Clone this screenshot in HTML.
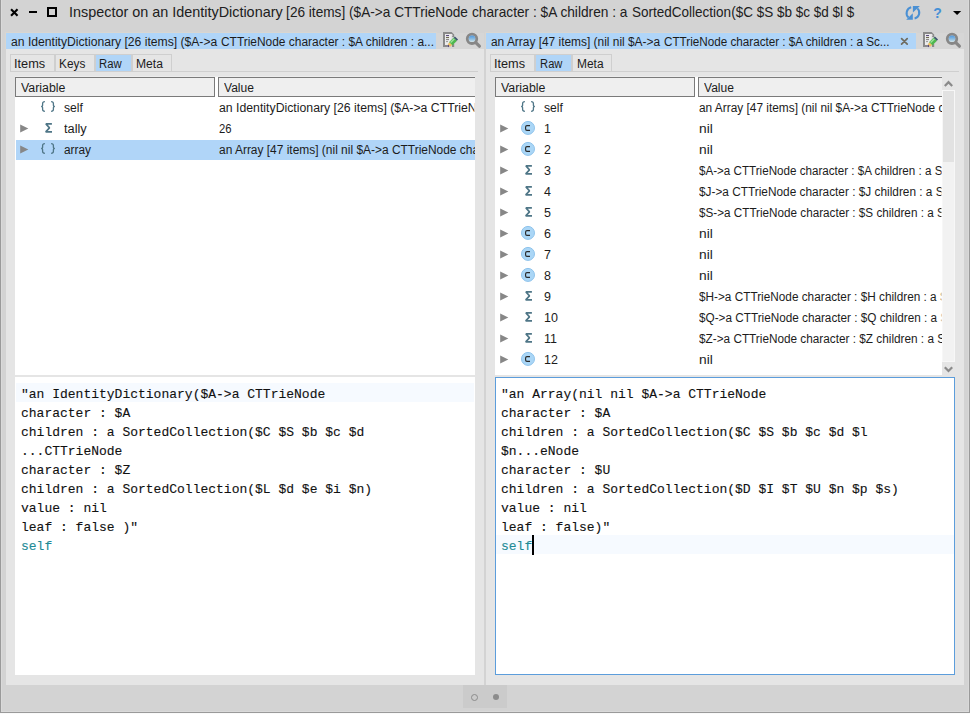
<!DOCTYPE html>
<html><head><meta charset="utf-8"><style>
*{margin:0;padding:0;box-sizing:border-box}
html,body{width:970px;height:714px;overflow:hidden;background:#d3d3d3}
body{position:relative;font-family:"Liberation Sans",sans-serif;color:#1c1c1c}
.a{position:absolute}
.t{position:absolute;white-space:pre;height:20px;line-height:20px}
.mono{position:absolute;font-family:"Liberation Mono",monospace;font-size:13px;line-height:19px;white-space:pre;color:#111;-webkit-text-stroke:0.12px #111}
</style></head><body>
<div class="a" style="left:0px;top:0px;width:1px;height:713px;background:#9a9a9a;"></div>
<div class="a" style="left:1px;top:0px;width:1px;height:712px;background:#dadada;"></div>
<div class="a" style="left:968px;top:0px;width:1px;height:712px;background:#d9d9d9;"></div>
<div class="a" style="left:969px;top:0px;width:1px;height:713px;background:#9a9a9a;"></div>
<div class="a" style="left:1px;top:711px;width:968px;height:1px;background:#dadada;"></div>
<div class="a" style="left:0px;top:712px;width:970px;height:1px;background:#9a9a9a;"></div>
<div class="a" style="left:0px;top:713px;width:970px;height:1px;background:#fafafa;"></div>
<svg class="a" style="left:0;top:0" width="70" height="30">
 <path d="M11.8 9.9 L16.8 14.9 M16.8 9.9 L11.8 14.9" stroke="#000" stroke-width="2.1" stroke-linecap="square"/>
 <rect x="29" y="11" width="8" height="2" fill="#000"/>
 <rect x="48" y="8" width="8" height="8" fill="none" stroke="#000" stroke-width="2"/>
</svg>
<div class="t" style="left:68.90px;top:2px;font-size:15px;transform-origin:1.00px 50%;transform:scaleX(0.9594);color:#202020;">Inspector on an IdentityDictionary</div>
<div class="t" style="left:285.90px;top:2px;font-size:15px;transform-origin:1.00px 50%;transform:scaleX(0.9094);color:#202020;">[26 items] ($A-&gt;a CTTrieNode</div>
<div class="t" style="left:471.60px;top:2px;font-size:15px;transform-origin:0.00px 50%;transform:scaleX(0.9139);color:#202020;">character : $A children : a</div>
<div class="t" style="left:632.10px;top:2px;font-size:15px;transform-origin:0.00px 50%;transform:scaleX(0.9007);color:#202020;">SortedCollection($C $S $b $c $d $l $</div>
<svg class="a" style="left:900px;top:0" width="70" height="26" viewBox="900 0 70 26">
 <path d="M911.2 7.3 A6 6 0 0 0 908.6 17.6" fill="none" stroke="#4a90d4" stroke-width="2"/>
 <path d="M906.2 19.8 L912.8 19.8 L912.8 13.3Z" fill="#4a90d4"/>
 <path d="M914.6 18.6 A6 6 0 0 0 917.4 8.4" fill="none" stroke="#4a90d4" stroke-width="2"/>
 <path d="M912.9 6 L919.9 6 L912.9 12.6Z" fill="#4a90d4"/>
 <path d="M953 11 L961.2 11 L957.1 15Z" fill="#000"/>
</svg>
<div class="t" style="left:933.20px;top:3px;font-size:14px;letter-spacing:0.000px;word-spacing:0px;color:#4590d6;font-weight:bold;">?</div>
<svg width="0" height="0" style="position:absolute"><defs><linearGradient id="lens" x1="0" y1="0" x2="0" y2="1"><stop offset="0" stop-color="#4d98e0"/><stop offset="0.55" stop-color="#8fbde0"/><stop offset="1" stop-color="#d6e6ea"/></linearGradient></defs></svg>
<div class="a" style="left:5px;top:32px;width:432px;height:17px;background:#d9d6d0;"></div>
<div class="a" style="left:6px;top:49px;width:478px;height:636px;background:#e5e5e5;"></div>
<div class="a" style="left:6px;top:33px;width:430px;height:16px;background:#b0d5f8;"></div>
<div class="a" style="left:436px;top:33px;width:48px;height:16px;background:#d6d6d6;"></div>
<div class="t" style="left:10.70px;top:32px;font-size:12.5px;transform-origin:0.00px 50%;transform:scaleX(0.9717);">an IdentityDictionary [26 items] ($A-&gt;a</div>
<div class="t" style="left:221.10px;top:32px;font-size:12.5px;transform-origin:0.00px 50%;transform:scaleX(0.9541);">CTTrieNode character : $A children : a...</div>
<svg class="a" style="left:440px;top:30px" width="44" height="20" viewBox="440 30 44 20">
 <path d="M443 32 L451.6 32 L454.2 34.6 L454.2 37 L452.2 37 L452.2 34 L445 34 L445 45 L447 45 L447 47 L443 47Z" fill="#8a8a8a"/>
 <path d="M451.6 34 L451.6 35.5 L453 35.5Z" fill="#f4f4f4"/>
 <rect x="445" y="34" width="6.6" height="11" fill="#ececec"/>
 <rect x="452" y="44" width="2.2" height="3" fill="#8a8a8a"/>
 <rect x="446" y="35" width="3" height="1.1" fill="#5b4a7e"/>
 <rect x="446" y="37" width="3" height="1.1" fill="#6d6a4e"/>
 <rect x="446" y="39" width="3" height="1.1" fill="#8a8a8a"/>
 <rect x="446" y="41" width="2" height="1.1" fill="#a0a0a0"/>
 <path d="M450.6 43.9 L455.4 39.1" stroke="#4fb84f" stroke-width="4.6"/>
 <path d="M450.6 42.6 L454.4 38.8" stroke="#9ae39a" stroke-width="1.4"/>
 <path d="M455.3 39.2 L456.5 38" stroke="#3f5670" stroke-width="4.4"/>
 <path d="M448.9 45.6 L450.7 43.8" stroke="#f4c060" stroke-width="3.6"/>
 <path d="M447.6 46.6 L448.8 45.4" stroke="#4a3a6a" stroke-width="1.8"/>
 <circle cx="472" cy="38.8" r="4.7" fill="none" stroke="#878787" stroke-width="2.9"/>
 <circle cx="472" cy="38.8" r="3.3" fill="url(#lens)"/>
 <path d="M475.8 42.6 L479.4 46.2" stroke="#878787" stroke-width="3.2" stroke-linecap="round"/>
</svg>
<div class="a" style="left:10px;top:71px;width:468px;height:1px;background:#cfcfcf;"></div>
<div class="a" style="left:10px;top:54px;width:45px;height:18px;border:1px solid #cfcfcf;background:#e5e5e5"></div>
<div class="t" style="left:14.20px;top:54px;font-size:12.5px;transform-origin:1.00px 50%;transform:scaleX(1.0201);">Items</div>
<div class="a" style="left:55px;top:54px;width:40px;height:18px;border:1px solid #cfcfcf;background:#e5e5e5"></div>
<div class="t" style="left:59.30px;top:54px;font-size:12.5px;transform-origin:1.00px 50%;transform:scaleX(0.9458);">Keys</div>
<div class="a" style="left:95px;top:54px;width:37px;height:18px;border:1px solid #cfcfcf;background:#b0d5f8"></div>
<div class="t" style="left:99.20px;top:54px;font-size:12.5px;transform-origin:1.00px 50%;transform:scaleX(0.9048);">Raw</div>
<div class="a" style="left:132px;top:54px;width:40px;height:18px;border:1px solid #cfcfcf;background:#e5e5e5"></div>
<div class="t" style="left:136.30px;top:54px;font-size:12.5px;transform-origin:1.00px 50%;transform:scaleX(0.9688);">Meta</div>
<div class="a" style="left:15px;top:76px;width:460px;height:299px;background:#fff;"></div>
<div class="a" style="left:15px;top:76px;width:460px;height:1px;background:#ececec;"></div>
<div class="a" style="left:15px;top:77px;width:200px;height:20px;border:1px solid #7a7a7a;background:#efefef"></div>
<div class="a" style="left:218px;top:77px;width:257px;height:20px;border:1px solid #7a7a7a;border-right:none;background:#efefef"></div>
<div class="t" style="left:20.80px;top:78px;font-size:12.5px;transform-origin:0.00px 50%;transform:scaleX(0.9893);">Variable</div>
<div class="t" style="left:223.90px;top:78px;font-size:12.5px;transform-origin:0.00px 50%;transform:scaleX(0.9649);">Value</div>
<svg class="a" style="left:39px;top:98px" width="18" height="16" viewBox="39 98 18 16"><path d="M44.90 101.60 Q42.60 101.60 42.60 103.50 L42.60 105.40 Q42.60 106.40 41.10 106.40 Q42.60 106.40 42.60 107.40 L42.60 109.60 Q42.60 111.40 44.90 111.40 M51.10 101.60 Q53.40 101.60 53.40 103.50 L53.40 105.40 Q53.40 106.40 54.90 106.40 Q53.40 106.40 53.40 107.40 L53.40 109.60 Q53.40 111.40 51.10 111.40" fill="none" stroke="#4f7687" stroke-width="1.3"/></svg>
<div class="t" style="left:64.10px;top:98px;font-size:12.5px;transform-origin:0.00px 50%;transform:scaleX(0.9710);">self</div>
<div class="t" style="left:219.30px;top:98px;font-size:12.5px;transform-origin:0.00px 50%;transform:scaleX(0.9819);width:260.42px;overflow:hidden;">an IdentityDictionary [26 items] ($A-&gt;a CTTrieNode character : $A children</div>
<svg class="a" style="left:19px;top:122px" width="11" height="12" viewBox="19 122 11 12"><path d="M20.2 124.4 L28.3 128.4 L20.2 132.4Z" fill="#878787"/></svg>
<svg class="a" style="left:43px;top:120px" width="12" height="15" viewBox="43 120 12 15"><path d="M51.9 123.9 L45.9 123.9 L49.5 127.9 L45.7 131.9 L52 131.9" fill="none" stroke="#4f7687" stroke-width="1.65" stroke-linejoin="bevel"/></svg>
<div class="t" style="left:64.10px;top:119px;font-size:12.5px;transform-origin:0.00px 50%;transform:scaleX(1.0227);">tally</div>
<div class="t" style="left:219.30px;top:119px;font-size:12.5px;transform-origin:0.00px 50%;transform:scaleX(0.9031);width:283.14px;overflow:hidden;">26</div>
<div class="a" style="left:16px;top:140px;width:459px;height:20px;background:#b0d5f8;"></div>
<svg class="a" style="left:19px;top:143px" width="11" height="12" viewBox="19 143 11 12"><path d="M20.2 145.4 L28.3 149.4 L20.2 153.4Z" fill="#878787"/></svg>
<svg class="a" style="left:39px;top:140px" width="18" height="16" viewBox="39 140 18 16"><path d="M44.90 143.60 Q42.60 143.60 42.60 145.50 L42.60 147.40 Q42.60 148.40 41.10 148.40 Q42.60 148.40 42.60 149.40 L42.60 151.60 Q42.60 153.40 44.90 153.40 M51.10 143.60 Q53.40 143.60 53.40 145.50 L53.40 147.40 Q53.40 148.40 54.90 148.40 Q53.40 148.40 53.40 149.40 L53.40 151.60 Q53.40 153.40 51.10 153.40" fill="none" stroke="#4f7687" stroke-width="1.3"/></svg>
<div class="t" style="left:64.10px;top:140px;font-size:12.5px;transform-origin:0.00px 50%;transform:scaleX(0.9477);">array</div>
<div class="t" style="left:219.30px;top:140px;font-size:12.5px;transform-origin:0.00px 50%;transform:scaleX(0.9553);width:267.68px;overflow:hidden;">an Array [47 items] (nil nil $A-&gt;a CTTrieNode character : $A children</div>
<div class="a" style="left:15px;top:377px;width:460px;height:298px;background:#fff;"></div>
<div class="a" style="left:16px;top:383px;width:458px;height:19px;background:#f6faff;"></div>
<div class="mono" style="left:21px;top:385px">"an IdentityDictionary($A-&gt;a CTTrieNode
character : $A
children : a SortedCollection($C $S $b $c $d
...CTTrieNode
character : $Z
children : a SortedCollection($L $d $e $i $n)
value : nil
leaf : false )"
<span style="color:#1e8a96;-webkit-text-stroke-color:#1e8a96">self</span></div>
<div class="a" style="left:484px;top:32px;width:2px;height:654px;background:#d3d3d3;"></div>
<div class="a" style="left:485px;top:32px;width:432px;height:17px;background:#d9d6d0;"></div>
<div class="a" style="left:486px;top:49px;width:478px;height:636px;background:#e5e5e5;"></div>
<div class="a" style="left:486px;top:33px;width:430px;height:16px;background:#b0d5f8;"></div>
<div class="a" style="left:916px;top:33px;width:48px;height:16px;background:#d6d6d6;"></div>
<div class="t" style="left:490.50px;top:32px;font-size:12.5px;transform-origin:0.00px 50%;transform:scaleX(0.9526);">an Array [47 items] (nil nil $A-&gt;a</div>
<div class="t" style="left:664.00px;top:32px;font-size:12.5px;transform-origin:0.00px 50%;transform:scaleX(0.9345);">CTTrieNode character : $A children : a Sc...</div>
<svg class="a" style="left:920px;top:30px" width="44" height="20" viewBox="920 30 44 20">
 <path d="M923 32 L931.6 32 L934.2 34.6 L934.2 37 L932.2 37 L932.2 34 L925 34 L925 45 L927 45 L927 47 L923 47Z" fill="#8a8a8a"/>
 <path d="M931.6 34 L931.6 35.5 L933 35.5Z" fill="#f4f4f4"/>
 <rect x="925" y="34" width="6.6" height="11" fill="#ececec"/>
 <rect x="932" y="44" width="2.2" height="3" fill="#8a8a8a"/>
 <rect x="926" y="35" width="3" height="1.1" fill="#5b4a7e"/>
 <rect x="926" y="37" width="3" height="1.1" fill="#6d6a4e"/>
 <rect x="926" y="39" width="3" height="1.1" fill="#8a8a8a"/>
 <rect x="926" y="41" width="2" height="1.1" fill="#a0a0a0"/>
 <path d="M930.6 43.9 L935.4 39.1" stroke="#4fb84f" stroke-width="4.6"/>
 <path d="M930.6 42.6 L934.4 38.8" stroke="#9ae39a" stroke-width="1.4"/>
 <path d="M935.3 39.2 L936.5 38" stroke="#3f5670" stroke-width="4.4"/>
 <path d="M928.9 45.6 L930.7 43.8" stroke="#f4c060" stroke-width="3.6"/>
 <path d="M927.6 46.6 L928.8 45.4" stroke="#4a3a6a" stroke-width="1.8"/>
 <circle cx="952" cy="38.8" r="4.7" fill="none" stroke="#878787" stroke-width="2.9"/>
 <circle cx="952" cy="38.8" r="3.3" fill="url(#lens)"/>
 <path d="M955.8 42.6 L959.4 46.2" stroke="#878787" stroke-width="3.2" stroke-linecap="round"/>
</svg>
<div class="a" style="left:490px;top:71px;width:469px;height:1px;background:#cfcfcf;"></div>
<div class="a" style="left:490px;top:54px;width:45px;height:18px;border:1px solid #cfcfcf;background:#e5e5e5"></div>
<div class="t" style="left:494.40px;top:54px;font-size:12.5px;transform-origin:1.00px 50%;transform:scaleX(1.0167);">Items</div>
<div class="a" style="left:535px;top:54px;width:37px;height:18px;border:1px solid #cfcfcf;background:#b0d5f8"></div>
<div class="t" style="left:539.50px;top:54px;font-size:12.5px;transform-origin:1.00px 50%;transform:scaleX(0.8927);">Raw</div>
<div class="a" style="left:572px;top:54px;width:40px;height:18px;border:1px solid #cfcfcf;background:#e5e5e5"></div>
<div class="t" style="left:576.60px;top:54px;font-size:12.5px;transform-origin:1.00px 50%;transform:scaleX(0.9539);">Meta</div>
<div class="a" style="left:495px;top:76px;width:447px;height:299px;background:#fff;"></div>
<div class="a" style="left:495px;top:76px;width:447px;height:1px;background:#ececec;"></div>
<div class="a" style="left:495px;top:77px;width:200px;height:20px;border:1px solid #7a7a7a;background:#efefef"></div>
<div class="a" style="left:698px;top:77px;width:244px;height:20px;border:1px solid #7a7a7a;border-right:none;background:#efefef"></div>
<div class="t" style="left:500.80px;top:78px;font-size:12.5px;transform-origin:0.00px 50%;transform:scaleX(0.9893);">Variable</div>
<div class="t" style="left:703.90px;top:78px;font-size:12.5px;transform-origin:0.00px 50%;transform:scaleX(0.9649);">Value</div>
<svg class="a" style="left:519px;top:98px" width="18" height="16" viewBox="519 98 18 16"><path d="M524.90 101.60 Q522.60 101.60 522.60 103.50 L522.60 105.40 Q522.60 106.40 521.10 106.40 Q522.60 106.40 522.60 107.40 L522.60 109.60 Q522.60 111.40 524.90 111.40 M531.10 101.60 Q533.40 101.60 533.40 103.50 L533.40 105.40 Q533.40 106.40 534.90 106.40 Q533.40 106.40 533.40 107.40 L533.40 109.60 Q533.40 111.40 531.10 111.40" fill="none" stroke="#4f7687" stroke-width="1.3"/></svg>
<div class="t" style="left:544.10px;top:98px;font-size:12.5px;transform-origin:0.00px 50%;transform:scaleX(0.9710);">self</div>
<div class="t" style="left:699.30px;top:98px;font-size:12.5px;transform-origin:0.00px 50%;transform:scaleX(0.9498);width:255.54px;overflow:hidden;">an Array [47 items] (nil nil $A-&gt;a CTTrieNode character : $A</div>
<svg class="a" style="left:499px;top:122px" width="11" height="12" viewBox="499 122 11 12"><path d="M500.2 124.4 L508.3 128.4 L500.2 132.4Z" fill="#878787"/></svg>
<svg class="a" style="left:520px;top:119px" width="16" height="18" viewBox="520 119 16 18"><circle cx="528" cy="127.9" r="6.5" fill="#aad6f6" stroke="#8ec3ec" stroke-width="1"/><path d="M530 125.60000000000001 L527 125.60000000000001 Q525.6 125.60000000000001 525.6 127.0 L525.6 129.0 Q525.6 130.4 527 130.4 L530 130.4" fill="none" stroke="#2a2a2a" stroke-width="1.15"/></svg>
<div class="t" style="left:544.10px;top:119px;font-size:12.5px;letter-spacing:0.000px;word-spacing:-0.6px;">1</div>
<div class="t" style="left:699.30px;top:119px;font-size:12.5px;transform-origin:0.00px 50%;transform:scaleX(1.0998);width:220.67px;overflow:hidden;">nil</div>
<svg class="a" style="left:499px;top:143px" width="11" height="12" viewBox="499 143 11 12"><path d="M500.2 145.4 L508.3 149.4 L500.2 153.4Z" fill="#878787"/></svg>
<svg class="a" style="left:520px;top:140px" width="16" height="18" viewBox="520 140 16 18"><circle cx="528" cy="148.9" r="6.5" fill="#aad6f6" stroke="#8ec3ec" stroke-width="1"/><path d="M530 146.6 L527 146.6 Q525.6 146.6 525.6 148.0 L525.6 150.0 Q525.6 151.4 527 151.4 L530 151.4" fill="none" stroke="#2a2a2a" stroke-width="1.15"/></svg>
<div class="t" style="left:544.10px;top:140px;font-size:12.5px;letter-spacing:0.000px;word-spacing:-0.6px;">2</div>
<div class="t" style="left:699.30px;top:140px;font-size:12.5px;transform-origin:0.00px 50%;transform:scaleX(1.0998);width:220.67px;overflow:hidden;">nil</div>
<svg class="a" style="left:499px;top:164px" width="11" height="12" viewBox="499 164 11 12"><path d="M500.2 166.4 L508.3 170.4 L500.2 174.4Z" fill="#878787"/></svg>
<svg class="a" style="left:523px;top:162px" width="12" height="15" viewBox="523 162 12 15"><path d="M531.9 165.9 L525.9 165.9 L529.5 169.9 L525.7 173.9 L532 173.9" fill="none" stroke="#4f7687" stroke-width="1.65" stroke-linejoin="bevel"/></svg>
<div class="t" style="left:544.10px;top:161px;font-size:12.5px;letter-spacing:0.000px;word-spacing:-0.6px;">3</div>
<div class="t" style="left:699.30px;top:161px;font-size:12.5px;transform-origin:0.00px 50%;transform:scaleX(0.9297);width:261.06px;overflow:hidden;">$A-&gt;a CTTrieNode character : $A children : a SortedCollection</div>
<svg class="a" style="left:499px;top:185px" width="11" height="12" viewBox="499 185 11 12"><path d="M500.2 187.4 L508.3 191.4 L500.2 195.4Z" fill="#878787"/></svg>
<svg class="a" style="left:523px;top:183px" width="12" height="15" viewBox="523 183 12 15"><path d="M531.9 186.9 L525.9 186.9 L529.5 190.9 L525.7 194.9 L532 194.9" fill="none" stroke="#4f7687" stroke-width="1.65" stroke-linejoin="bevel"/></svg>
<div class="t" style="left:544.10px;top:182px;font-size:12.5px;letter-spacing:0.000px;word-spacing:-0.6px;">4</div>
<div class="t" style="left:699.30px;top:182px;font-size:12.5px;transform-origin:0.00px 50%;transform:scaleX(0.9470);width:256.28px;overflow:hidden;">$J-&gt;a CTTrieNode character : $J children : a SortedCollection</div>
<svg class="a" style="left:499px;top:206px" width="11" height="12" viewBox="499 206 11 12"><path d="M500.2 208.4 L508.3 212.4 L500.2 216.4Z" fill="#878787"/></svg>
<svg class="a" style="left:523px;top:204px" width="12" height="15" viewBox="523 204 12 15"><path d="M531.9 207.9 L525.9 207.9 L529.5 211.9 L525.7 215.9 L532 215.9" fill="none" stroke="#4f7687" stroke-width="1.65" stroke-linejoin="bevel"/></svg>
<div class="t" style="left:544.10px;top:203px;font-size:12.5px;letter-spacing:0.000px;word-spacing:-0.6px;">5</div>
<div class="t" style="left:699.30px;top:203px;font-size:12.5px;transform-origin:0.00px 50%;transform:scaleX(0.9360);width:259.28px;overflow:hidden;">$S-&gt;a CTTrieNode character : $S children : a SortedCollection</div>
<svg class="a" style="left:499px;top:227px" width="11" height="12" viewBox="499 227 11 12"><path d="M500.2 229.4 L508.3 233.4 L500.2 237.4Z" fill="#878787"/></svg>
<svg class="a" style="left:520px;top:224px" width="16" height="18" viewBox="520 224 16 18"><circle cx="528" cy="232.9" r="6.5" fill="#aad6f6" stroke="#8ec3ec" stroke-width="1"/><path d="M530 230.6 L527 230.6 Q525.6 230.6 525.6 232.0 L525.6 234.0 Q525.6 235.4 527 235.4 L530 235.4" fill="none" stroke="#2a2a2a" stroke-width="1.15"/></svg>
<div class="t" style="left:544.10px;top:224px;font-size:12.5px;letter-spacing:0.000px;word-spacing:-0.6px;">6</div>
<div class="t" style="left:699.30px;top:224px;font-size:12.5px;transform-origin:0.00px 50%;transform:scaleX(1.0998);width:220.67px;overflow:hidden;">nil</div>
<svg class="a" style="left:499px;top:248px" width="11" height="12" viewBox="499 248 11 12"><path d="M500.2 250.4 L508.3 254.4 L500.2 258.4Z" fill="#878787"/></svg>
<svg class="a" style="left:520px;top:245px" width="16" height="18" viewBox="520 245 16 18"><circle cx="528" cy="253.9" r="6.5" fill="#aad6f6" stroke="#8ec3ec" stroke-width="1"/><path d="M530 251.6 L527 251.6 Q525.6 251.6 525.6 253.0 L525.6 255.0 Q525.6 256.4 527 256.4 L530 256.4" fill="none" stroke="#2a2a2a" stroke-width="1.15"/></svg>
<div class="t" style="left:544.10px;top:245px;font-size:12.5px;letter-spacing:0.000px;word-spacing:-0.6px;">7</div>
<div class="t" style="left:699.30px;top:245px;font-size:12.5px;transform-origin:0.00px 50%;transform:scaleX(1.0998);width:220.67px;overflow:hidden;">nil</div>
<svg class="a" style="left:499px;top:269px" width="11" height="12" viewBox="499 269 11 12"><path d="M500.2 271.4 L508.3 275.4 L500.2 279.4Z" fill="#878787"/></svg>
<svg class="a" style="left:520px;top:266px" width="16" height="18" viewBox="520 266 16 18"><circle cx="528" cy="274.9" r="6.5" fill="#aad6f6" stroke="#8ec3ec" stroke-width="1"/><path d="M530 272.59999999999997 L527 272.59999999999997 Q525.6 272.59999999999997 525.6 274.0 L525.6 276.0 Q525.6 277.4 527 277.4 L530 277.4" fill="none" stroke="#2a2a2a" stroke-width="1.15"/></svg>
<div class="t" style="left:544.10px;top:266px;font-size:12.5px;letter-spacing:0.000px;word-spacing:-0.6px;">8</div>
<div class="t" style="left:699.30px;top:266px;font-size:12.5px;transform-origin:0.00px 50%;transform:scaleX(1.0998);width:220.67px;overflow:hidden;">nil</div>
<svg class="a" style="left:499px;top:290px" width="11" height="12" viewBox="499 290 11 12"><path d="M500.2 292.4 L508.3 296.4 L500.2 300.4Z" fill="#878787"/></svg>
<svg class="a" style="left:523px;top:288px" width="12" height="15" viewBox="523 288 12 15"><path d="M531.9 291.9 L525.9 291.9 L529.5 295.9 L525.7 299.9 L532 299.9" fill="none" stroke="#4f7687" stroke-width="1.65" stroke-linejoin="bevel"/></svg>
<div class="t" style="left:544.10px;top:287px;font-size:12.5px;letter-spacing:0.000px;word-spacing:-0.6px;">9</div>
<div class="t" style="left:699.30px;top:287px;font-size:12.5px;transform-origin:0.00px 50%;transform:scaleX(0.9428);width:257.42px;overflow:hidden;">$H-&gt;a CTTrieNode character : $H children : a SortedCollection</div>
<svg class="a" style="left:499px;top:311px" width="11" height="12" viewBox="499 311 11 12"><path d="M500.2 313.4 L508.3 317.4 L500.2 321.4Z" fill="#878787"/></svg>
<svg class="a" style="left:523px;top:309px" width="12" height="15" viewBox="523 309 12 15"><path d="M531.9 312.9 L525.9 312.9 L529.5 316.9 L525.7 320.9 L532 320.9" fill="none" stroke="#4f7687" stroke-width="1.65" stroke-linejoin="bevel"/></svg>
<div class="t" style="left:544.10px;top:308px;font-size:12.5px;letter-spacing:0.000px;word-spacing:-0.6px;">10</div>
<div class="t" style="left:699.30px;top:308px;font-size:12.5px;transform-origin:0.00px 50%;transform:scaleX(0.9396);width:258.30px;overflow:hidden;">$Q-&gt;a CTTrieNode character : $Q children : a SortedCollection</div>
<svg class="a" style="left:499px;top:332px" width="11" height="12" viewBox="499 332 11 12"><path d="M500.2 334.4 L508.3 338.4 L500.2 342.4Z" fill="#878787"/></svg>
<svg class="a" style="left:523px;top:330px" width="12" height="15" viewBox="523 330 12 15"><path d="M531.9 333.9 L525.9 333.9 L529.5 337.9 L525.7 341.9 L532 341.9" fill="none" stroke="#4f7687" stroke-width="1.65" stroke-linejoin="bevel"/></svg>
<div class="t" style="left:544.10px;top:329px;font-size:12.5px;letter-spacing:0.000px;word-spacing:-0.6px;">11</div>
<div class="t" style="left:699.30px;top:329px;font-size:12.5px;transform-origin:0.00px 50%;transform:scaleX(0.9425);width:257.50px;overflow:hidden;">$Z-&gt;a CTTrieNode character : $Z children : a SortedCollection</div>
<svg class="a" style="left:499px;top:353px" width="11" height="12" viewBox="499 353 11 12"><path d="M500.2 355.4 L508.3 359.4 L500.2 363.4Z" fill="#878787"/></svg>
<svg class="a" style="left:520px;top:350px" width="16" height="18" viewBox="520 350 16 18"><circle cx="528" cy="358.9" r="6.5" fill="#aad6f6" stroke="#8ec3ec" stroke-width="1"/><path d="M530 356.59999999999997 L527 356.59999999999997 Q525.6 356.59999999999997 525.6 358.0 L525.6 360.0 Q525.6 361.4 527 361.4 L530 361.4" fill="none" stroke="#2a2a2a" stroke-width="1.15"/></svg>
<div class="t" style="left:544.10px;top:350px;font-size:12.5px;letter-spacing:0.000px;word-spacing:-0.6px;">12</div>
<div class="t" style="left:699.30px;top:350px;font-size:12.5px;transform-origin:0.00px 50%;transform:scaleX(1.0998);width:220.67px;overflow:hidden;">nil</div>
<div class="a" style="left:495px;top:377px;width:460px;height:298px;background:#fff;border:1px solid #5c9ddb"></div>
<div class="a" style="left:496px;top:535px;width:458px;height:19px;background:#f6faff;"></div>
<div class="mono" style="left:501px;top:385px">"an Array(nil nil $A-&gt;a CTTrieNode
character : $A
children : a SortedCollection($C $S $b $c $d $l
$n...eNode
character : $U
children : a SortedCollection($D $I $T $U $n $p $s)
value : nil
leaf : false)"
<span style="color:#1e8a96;-webkit-text-stroke-color:#1e8a96">self</span></div>
<div class="a" style="left:532px;top:535px;width:2px;height:20px;background:#000;"></div>
<svg class="a" style="left:898px;top:35px" width="14" height="12" viewBox="898 35 14 12"><path d="M901.6 38.6 L907.2 44.2 M907.2 38.6 L901.6 44.2" stroke="#6f6c60" stroke-width="1.7" stroke-linecap="round"/></svg>
<div class="a" style="left:942px;top:76px;width:13px;height:299px;background:#e5e5e5;"></div>
<div class="a" style="left:942px;top:90px;width:13px;height:272px;background:#f2f2f2;border:1px solid #f7f7f7"></div>
<div class="a" style="left:943px;top:91px;width:11px;height:71px;background:#e2e2e2;"></div>
<svg class="a" style="left:940px;top:76px" width="16" height="299" viewBox="940 76 16 299">
 <path d="M944.8 86 L948.5 82.2 L952.2 86" fill="none" stroke="#8a8a8a" stroke-width="2.2"/>
 <path d="M944.8 367.2 L948.5 371 L952.2 367.2" fill="none" stroke="#8a8a8a" stroke-width="2.2"/>
</svg>
<div class="a" style="left:463px;top:685px;width:44px;height:23px;background:#cbcbcb;"></div>
<div class="a" style="left:471px;top:694px;width:7px;height:7px;border:1px solid #8c8c8c;border-radius:50%"></div>
<div class="a" style="left:493px;top:694px;width:6.4px;height:6.4px;background:#8c8c8c;border-radius:50%"></div>
</body></html>
